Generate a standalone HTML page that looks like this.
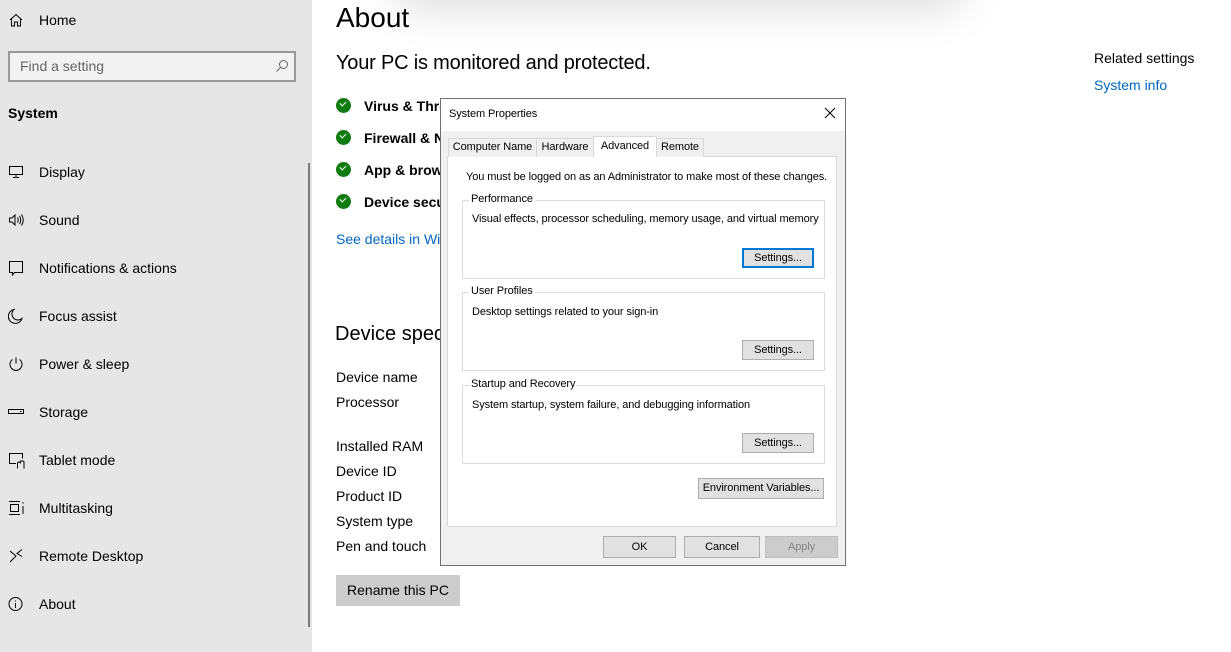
<!DOCTYPE html>
<html><head><style>
*{margin:0;padding:0;box-sizing:border-box}
body{width:1231px;height:652px;overflow:hidden;background:#fff;font-family:"Liberation Sans",sans-serif;position:relative;color:#000}
.a{position:absolute;white-space:nowrap}
.side{position:absolute;left:0;top:0;width:312px;height:652px;background:#e6e6e6}
.nav{position:absolute;left:39px;font-size:14px;color:#000}
.ic{position:absolute;left:8px}
.d{font-size:11px;letter-spacing:-0.1px}
.btn{position:absolute;background:#e1e1e1;border:1px solid #adadad;font-size:11px;text-align:center;line-height:18px;white-space:nowrap;letter-spacing:-0.1px}
.grp{position:absolute;border:1px solid #dcdcdc}
.gl{position:absolute;top:-8px;left:6px;background:#fff;padding:0 2px;font-size:11px;white-space:nowrap;letter-spacing:-0.1px}
.tab{position:absolute;top:138px;height:19px;border:1px solid #d9d9d9;border-bottom:none;background:#f0f0f0;font-size:11px;line-height:17px;text-align:center;white-space:nowrap;letter-spacing:-0.1px}
.chk{position:absolute;left:336px;width:15px;height:15px;border-radius:50%;background:#107c10}
.chk:after{content:"";position:absolute;left:4px;top:3px;width:5px;height:3px;border-left:1.5px solid #fff;border-bottom:1.5px solid #fff;transform:rotate(-45deg)}
.sec{position:absolute;left:364px;font-size:14px;font-weight:bold}
.spec{position:absolute;left:336px;font-size:14px}
</style></head><body>
<div class="side">
<svg class="ic" style="top:12px" width="16" height="16" viewBox="0 0 16 16" fill="none" stroke="#000" stroke-width="1"><path d="M2 8L8 2.5L14 8M3.5 7v7h3v-4h3v4h3V7"/></svg>
<div class="nav" style="top:12px">Home</div>
<div class="a" style="left:8px;top:51px;width:288px;height:31px;border:2px solid #999;background:#f2f2f2"></div>
<div class="a" style="left:20px;top:58px;font-size:14px;color:#666">Find a setting</div>
<svg class="a" style="left:275px;top:59px" width="14" height="14" viewBox="0 0 14 14" fill="none" stroke="#666"><circle cx="8.5" cy="5.5" r="4"/><path d="M5.5 8.5L1.5 12.5"/></svg>
<div class="a" style="left:8px;top:105px;font-size:14px;font-weight:bold">System</div>
<svg class="ic" style="top:164px" width="16" height="16" viewBox="0 0 16 16" fill="none" stroke="#000"><rect x="1.5" y="2.5" width="13" height="8"/><path d="M8 10.5v3M5 13.5h6"/></svg>
<div class="nav" style="top:164px">Display</div>
<svg class="ic" style="top:212px" width="18" height="16" viewBox="0 0 18 16" fill="none" stroke="#000"><path d="M1.5 6h2.5l3-3v10l-3-3H1.5z"/><path d="M9.5 5.5q1.5 2.5 0 5M11.5 4q2.5 4 0 8M13.5 2.5q3.5 5.5 0 11"/></svg>
<div class="nav" style="top:212px">Sound</div>
<svg class="ic" style="top:260px" width="16" height="16" viewBox="0 0 16 16" fill="none" stroke="#000"><path d="M1.5 1.5h13v11h-8l-2 2.5v-2.5h-3z"/></svg>
<div class="nav" style="top:260px">Notifications &amp; actions</div>
<svg class="ic" style="top:308px" width="16" height="16" viewBox="0 0 16 16" fill="none" stroke="#000"><path d="M6 1.5a7 7 0 1 0 8 9a6 6 0 0 1-8-9z"/></svg>
<div class="nav" style="top:308px">Focus assist</div>
<svg class="ic" style="top:356px" width="16" height="16" viewBox="0 0 16 16" fill="none" stroke="#000"><path d="M8 1.5v6M4.5 3.5a6 6 0 1 0 7 0"/></svg>
<div class="nav" style="top:356px">Power &amp; sleep</div>
<svg class="ic" style="top:404px" width="16" height="16" viewBox="0 0 16 16" fill="none" stroke="#000"><rect x="0.5" y="5.5" width="15" height="4"/><path d="M12 7.5h1.5"/></svg>
<div class="nav" style="top:404px">Storage</div>
<svg class="ic" style="top:452px" width="18" height="18" viewBox="0 0 18 18" fill="none" stroke="#000"><path d="M8 11.5H1.5v-10h13v5"/><path d="M9.5 16.5v-5a1.5 1.5 0 0 1 3 0v-3M12.5 9h2a1.5 1.5 0 0 1 1.5 1.5v6"/></svg>
<div class="nav" style="top:452px">Tablet mode</div>
<svg class="ic" style="top:500px" width="18" height="16" viewBox="0 0 18 16" fill="none" stroke="#000"><path d="M1 1.5h11M1 14.5h11M2.5 4.5h8v7h-8zM15 2v1.5M15 6v8"/></svg>
<div class="nav" style="top:500px">Multitasking</div>
<svg class="ic" style="top:548px" width="16" height="16" viewBox="0 0 16 16" fill="none" stroke="#000"><path d="M2 3l6 5-6 6M14 1.5l-5 4 5 3"/></svg>
<div class="nav" style="top:548px">Remote Desktop</div>
<svg class="ic" style="top:596px" width="16" height="16" viewBox="0 0 16 16" fill="none" stroke="#000"><circle cx="7.5" cy="8" r="6.5"/><path d="M7.5 7v5M7.5 4.5v1"/></svg>
<div class="nav" style="top:596px">About</div>
<div class="a" style="left:308px;top:163px;width:2px;height:464px;background:#7a7a7a"></div>
</div>
<div class="a" style="left:400px;top:-60px;width:560px;height:60px;box-shadow:0 5px 45px rgba(0,0,0,0.16);background:#fff"></div>
<div class="a" style="left:336px;top:2px;font-size:28px;font-weight:300">About</div>
<div class="a" style="left:336px;top:52px;font-size:20px;letter-spacing:-0.2px">Your PC is monitored and protected.</div>
<div class="chk" style="top:98px"></div><div class="sec" style="top:98px">Virus &amp; Threat</div>
<div class="chk" style="top:130px"></div><div class="sec" style="top:130px">Firewall &amp; Net</div>
<div class="chk" style="top:162px"></div><div class="sec" style="top:162px">App &amp; browser</div>
<div class="chk" style="top:194px"></div><div class="sec" style="top:194px">Device security</div>
<div class="a" style="left:336px;top:231px;font-size:14px;color:#0067c0">See details in Windows</div>
<div class="a" style="left:335px;top:323px;font-size:20px">Device specifications</div>
<div class="spec" style="top:369px">Device name</div>
<div class="spec" style="top:394px">Processor</div>
<div class="spec" style="top:438px">Installed RAM</div>
<div class="spec" style="top:463px">Device ID</div>
<div class="spec" style="top:488px">Product ID</div>
<div class="spec" style="top:513px">System type</div>
<div class="spec" style="top:538px">Pen and touch</div>
<div class="a" style="left:336px;top:575px;width:124px;height:31px;background:#ccc;font-size:14px;line-height:31px;text-align:center">Rename this PC</div>
<div class="a" style="left:1094px;top:50px;font-size:14px">Related settings</div>
<div class="a" style="left:1094px;top:77px;font-size:14px;color:#0067c0">System info</div>

<div class="a" style="left:440px;top:98px;width:406px;height:468px;border:1px solid #707070;background:#f0f0f0">
<div class="a" style="left:0;top:0;width:404px;height:32px;background:#fff"></div>
<div class="a d" style="left:8px;top:9px">System Properties</div>
<svg class="a" style="left:383px;top:8px" width="12" height="12" viewBox="0 0 12 12" stroke="#000"><path d="M1 1l10 10M11 1L1 11"/></svg>
</div>
<div class="a" style="left:447px;top:156px;width:390px;height:371px;background:#fff;border:1px solid #d9d9d9"></div>
<div class="tab" style="left:448px;width:89px">Computer Name</div>
<div class="tab" style="left:536px;width:58px">Hardware</div>
<div class="tab" style="left:656px;width:48px">Remote</div>
<div class="tab" style="left:593px;width:64px;top:136px;height:21px;background:#fff;line-height:18px">Advanced</div>
<div class="a d" style="left:466px;top:171px">You must be logged on as an Administrator to make most of these changes.</div>
<div class="grp" style="left:462px;top:200px;width:363px;height:79px"><div class="gl">Performance</div></div>
<div class="a d" style="left:472px;top:213px">Visual effects, processor scheduling, memory usage, and virtual memory</div>
<div class="btn" style="left:742px;top:248px;width:72px;height:20px;border:2px solid #0078d7;line-height:16px">Settings...</div>
<div class="grp" style="left:462px;top:292px;width:363px;height:79px"><div class="gl">User Profiles</div></div>
<div class="a d" style="left:472px;top:306px">Desktop settings related to your sign-in</div>
<div class="btn" style="left:742px;top:340px;width:72px;height:20px">Settings...</div>
<div class="grp" style="left:462px;top:385px;width:363px;height:79px"><div class="gl">Startup and Recovery</div></div>
<div class="a d" style="left:472px;top:399px">System startup, system failure, and debugging information</div>
<div class="btn" style="left:742px;top:433px;width:72px;height:20px">Settings...</div>
<div class="btn" style="left:698px;top:478px;width:126px;height:21px">Environment Variables...</div>
<div class="btn" style="left:603px;top:536px;width:73px;height:22px;line-height:20px">OK</div>
<div class="btn" style="left:684px;top:536px;width:76px;height:22px;line-height:20px">Cancel</div>
<div class="btn" style="left:765px;top:536px;width:73px;height:22px;line-height:20px;background:#ccc;border-color:#bfbfbf;color:#838383">Apply</div>
</body></html>
